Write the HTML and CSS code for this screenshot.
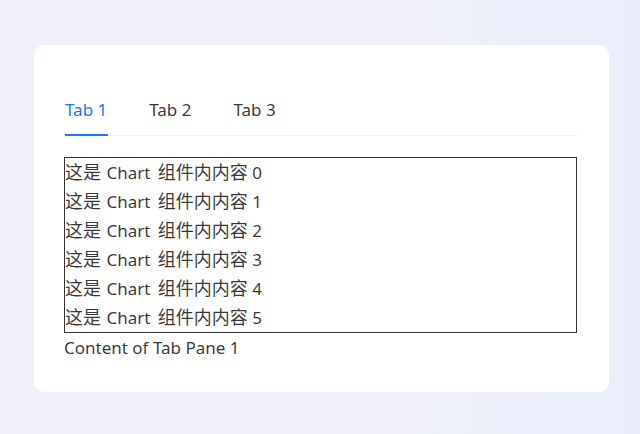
FILE: index.html
```html
<!DOCTYPE html>
<html lang="zh-CN">
<head>
<meta charset="utf-8">
<title>Tabs</title>
<link rel="stylesheet" href="styles.css">
</head>
<body>
<div class="page">
  <div class="card">
    <div class="tabs-nav">
      <div class="tab active">Tab 1</div>
      <div class="tab">Tab 2</div>
      <div class="tab">Tab 3</div>
    </div>
    <div class="pane">
      <div class="chart">
        <div class="row"><span class="zh">这是</span> <span class="latin">Chart</span> <span class="zh">组件内内容</span> 0</div>
        <div class="row"><span class="zh">这是</span> <span class="latin">Chart</span> <span class="zh">组件内内容</span> 1</div>
        <div class="row"><span class="zh">这是</span> <span class="latin">Chart</span> <span class="zh">组件内内容</span> 2</div>
        <div class="row"><span class="zh">这是</span> <span class="latin">Chart</span> <span class="zh">组件内内容</span> 3</div>
        <div class="row"><span class="zh">这是</span> <span class="latin">Chart</span> <span class="zh">组件内内容</span> 4</div>
        <div class="row"><span class="zh">这是</span> <span class="latin">Chart</span> <span class="zh">组件内内容</span> 5</div>
      </div>
      <div class="row">Content of Tab Pane 1</div>
    </div>
  </div>
</div>
</body>
</html>
```

FILE: styles.css
```css
html, body {
  margin: 0;
  padding: 0;
}
body {
  width: 640px;
  height: 434px;
  overflow: hidden;
  background: linear-gradient(90deg, #f1f0fb 0%, #eff0fb 60%, #eaeefb 100%);
  font-family: "Noto Sans", "Noto Sans CJK SC", sans-serif;
  font-size: 17px;
  color: rgba(0, 0, 0, 0.8);
}
.page {
  padding: 45px 31px 0 34px;
}
.card {
  width: 575px;
  height: 347px;
  box-sizing: border-box;
  background: #fff;
  border-radius: 10px;
  padding: 42px 32px 0 30px;
}
.tabs-nav {
  display: flex;
  gap: 41px;
  border-bottom: 1px solid #f0f0f0;
  margin-bottom: 21px;
}
.tab {
  padding: 12px 0 14px;
  line-height: 22px;
  font-size: 17px;
  position: relative;
  margin-left: 1px;
}
.tab.active {
  color: #1677ff;
}
.tab.active::after {
  content: "";
  position: absolute;
  left: 0;
  right: -1px;
  bottom: -1px;
  height: 2px;
  background: #1677ff;
}
.chart {
  border: 1px solid #333;
}
.row {
  height: 29px;
  line-height: 29px;
  white-space: nowrap;
}
.zh {
  font-family: "Noto Sans CJK SC", sans-serif;
  font-size: 18px;
  line-height: 1;
}
.latin {
  margin-left: 1px;
  margin-right: 3px;
}
```
